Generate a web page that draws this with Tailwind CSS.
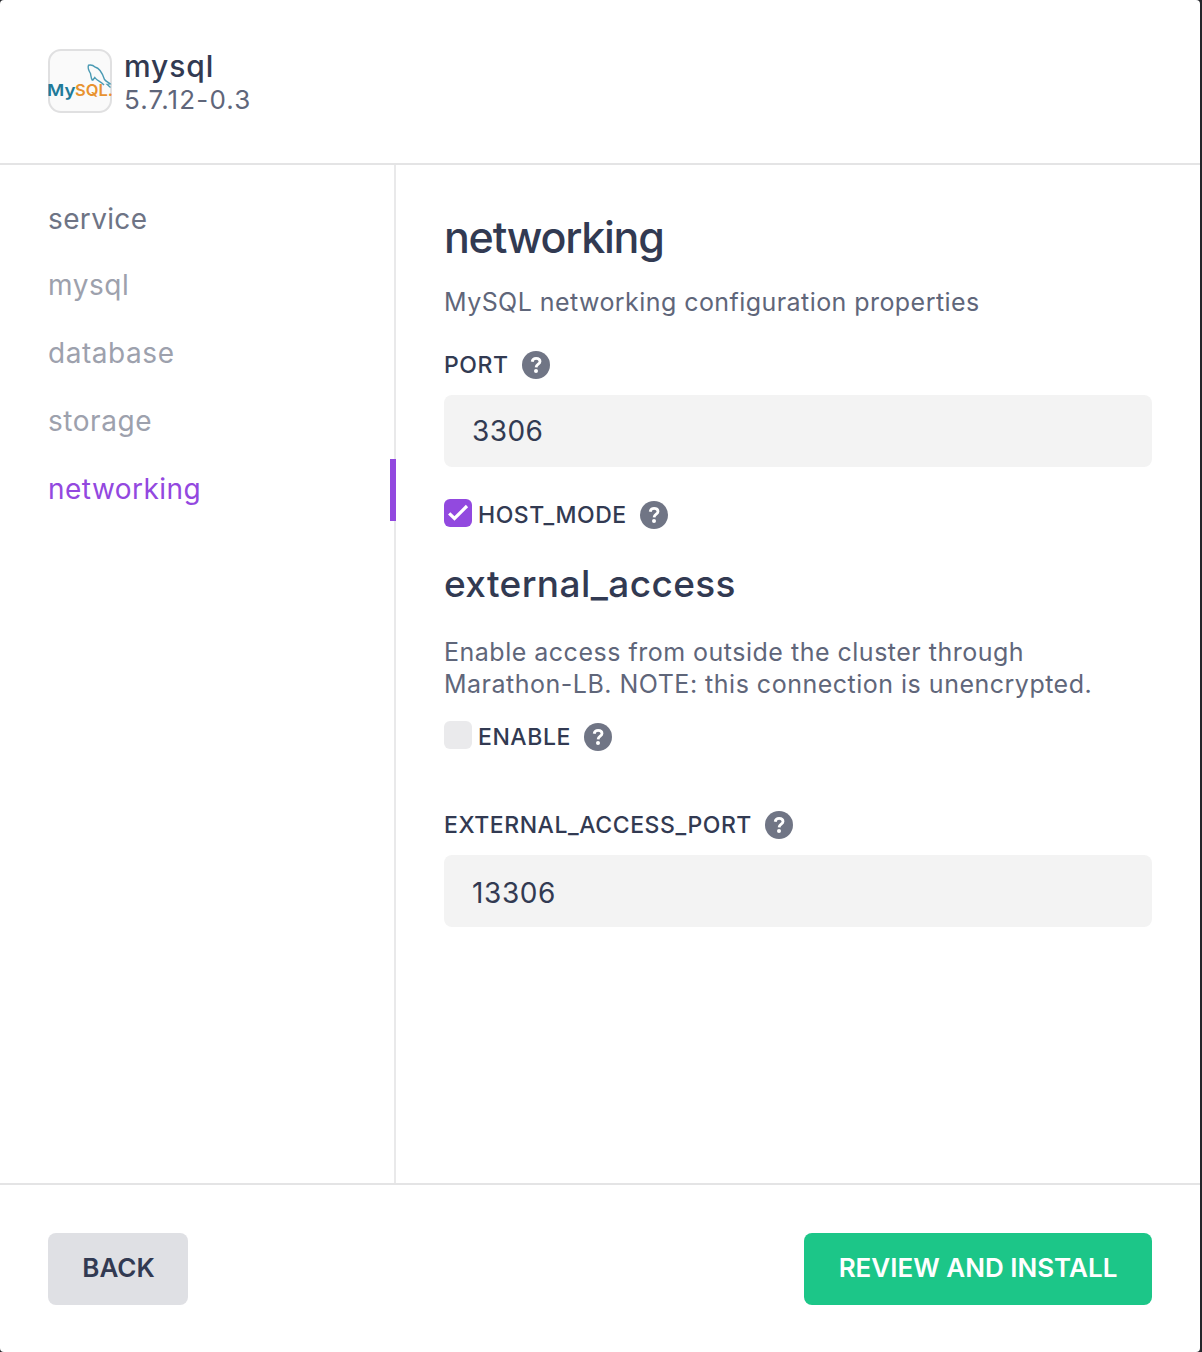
<!DOCTYPE html>
<html lang="en">
<head>
<meta charset="utf-8">
<title>mysql – configuration</title>
<script src="https://cdn.jsdelivr.net/npm/@tailwindcss/browser@4"></script>
</head>
<body class="bg-[#24262b] font-['Inter',sans-serif] text-[#323a52]">
<svg class="hidden">
  <symbol id="help" viewBox="0 0 28 28"><circle cx="14" cy="14" r="14" fill="#707585"/><path d="M10.200 10.800C10.500 8.500 12 7.400 14.100 7.400C16.400 7.400 18 8.600 18 10.600C18 13.200 14.200 13.200 14.100 16.400" fill="none" stroke="#fff" stroke-width="2.800"/><circle cx="14" cy="19.900" r="2" fill="#fff"/></symbol>
</svg>
<div class="flex h-[1352px] w-[1200px] flex-col rounded-[4px] bg-white">
  <header class="flex h-[165px] shrink-0 gap-3 border-b-2 border-[#e4e4e5] pt-[49px] pl-12">
    <svg class="size-16" viewBox="0 0 64 64">
      <rect x="1" y="1" width="62" height="62" rx="12" fill="#fafafa" stroke="#e0e0e1" stroke-width="2"/>
      <text x="-1" y="46.500" class="text-[16px] font-semibold" fill="#217a99" textLength="28.500" lengthAdjust="spacingAndGlyphs">My</text>
      <text x="27" y="46.500" class="text-[16px] font-semibold" fill="#e8922f" textLength="38" lengthAdjust="spacingAndGlyphs">SQL.</text>
      <path d="M44.500 31.500C43 29.500 43 27 42.500 24.500C41 22 39.500 18.500 40.500 16.200C43 15.600 45.500 16.500 47 18C52 19 54.500 24.500 56.500 30.500C58 32.500 60.500 33.500 62 34.800L59 35.300L62.500 38.500M44.500 31.500L46.800 28.500C49 32 53 32.500 56 36" fill="none" stroke="#4a9ab3" stroke-width="1.400"/>
    </svg>
    <div class="flex flex-col">
      <h2 class="-mt-px text-[30px] leading-9 font-medium tracking-[0.9px]">mysql</h2>
      <p class="text-[26px] leading-8 tracking-[1.15px] text-[#5f667a]">5.7.12-0.3</p>
    </div>
  </header>
  <div class="flex h-[1018px] shrink-0">
    <nav class="flex w-[396px] flex-col border-r-2 border-[#e9e9ea] pt-6 pl-12 text-[28px] tracking-[0.55px] text-[#9da1ad]">
      <a class="flex h-[66px] items-center pb-1.5 tracking-[0.35px] text-[#6e7485]"><span>service</span></a>
      <a class="flex h-[68px] items-center pb-2"><span>mysql</span></a>
      <a class="flex h-[68px] items-center pb-2"><span>database</span></a>
      <a class="flex h-[68px] items-center pb-2"><span>storage</span></a>
      <a class="-mr-0.5 flex h-[62px] items-center justify-between tracking-[0.48px] text-[#9348df]"><span class="pb-0.5">networking</span><span class="h-full w-1.5 bg-[#9249df]"></span></a>
    </nav>
    <main class="flex w-[804px] flex-col pt-11 pr-12 pl-12">
      <h1 class="text-[43px] leading-[56px] font-medium tracking-[-1.25px]">networking</h1>
      <p class="mt-[21px] text-[25px] leading-8 tracking-[0.44px] text-[#5f667a]">MySQL networking configuration properties</p>
      <div class="mt-[33px] flex h-7 items-center gap-[13px] text-[23px] font-medium tracking-[0.6px]"><span>PORT</span><svg class="size-7"><use href="#help"/></svg></div>
      <div class="mt-4 flex h-[72px] w-[708px] items-center rounded-lg bg-[#f3f3f3] pl-7 text-[28px] tracking-[0.45px]"><span>3306</span></div>
      <div class="mt-8 flex h-[30px] text-[23px] font-medium tracking-[0.55px]">
        <svg class="mr-1.5 size-7" viewBox="0 0 28 28"><rect width="28" height="28" rx="6" fill="#9249df"/><path d="M5.200 14.300L10.500 19.500L23 7" fill="none" stroke="#fff" stroke-width="3.200"/></svg>
        <span class="mr-[13px] leading-8">HOST_MODE</span><svg class="mt-0.5 size-7"><use href="#help"/></svg>
      </div>
      <h2 class="mt-[31px] text-[37px] leading-[48px] font-medium tracking-[0.38px]">external_access</h2>
      <p class="mt-7 text-[25px] leading-8 tracking-[0.5px] text-[#5f667a]">Enable access from outside the cluster through<br>Marathon-LB. NOTE: this connection is unencrypted.</p>
      <div class="mt-[21px] flex h-[30px] text-[23px] font-medium tracking-[0.55px]">
        <span class="mr-1.5 size-7 rounded-md bg-[#eaeaec]"></span>
        <span class="mr-[13px] leading-8">ENABLE</span><svg class="mt-0.5 size-7"><use href="#help"/></svg>
      </div>
      <div class="mt-[60px] flex h-7 items-center gap-[13px] text-[23px] font-medium tracking-[0.56px]"><span>EXTERNAL_ACCESS_PORT</span><svg class="size-7"><use href="#help"/></svg></div>
      <div class="mt-4 flex h-[72px] w-[708px] items-center rounded-lg bg-[#f3f3f3] pt-1 pl-7 text-[28px] tracking-[0.6px]"><span>13306</span></div>
    </main>
  </div>
  <footer class="flex h-[169px] shrink-0 items-start justify-between border-t-2 border-[#e4e4e5] px-12 pt-12">
    <button class="h-[72px] w-[140px] rounded-lg bg-[#dfe0e4] pb-1 pl-px text-[26px] font-semibold">BACK</button>
    <button class="h-[72px] w-[348px] rounded-lg bg-[#1cc688] pb-1 text-[26px] font-semibold text-white">REVIEW AND INSTALL</button>
  </footer>
</div>
</body>
</html>
